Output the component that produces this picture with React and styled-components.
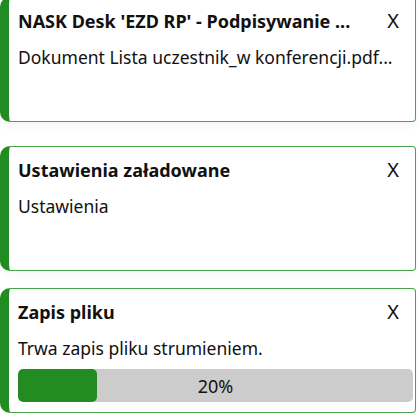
import styled, { createGlobalStyle } from "styled-components";

const GlobalStyle = createGlobalStyle`
  html, body {
    margin: 0;
    padding: 0;
    background: #ffffff;
    overflow: hidden;
  }
  body {
    font-family: "Noto Sans", "Open Sans", sans-serif;
    color: #111111;
  }
`;

const Stack = styled.div`
  display: flex;
  flex-direction: column;
  width: 416px;
`;

const Toast = styled.div`
  box-sizing: border-box;
  height: 125px;
  margin-top: ${(p) => p.$offset}px;
  background: #ffffff;
  border: 1px solid #46a446;
  border-left: 9px solid #228b22;
  border-radius: 10px 4px 4px 10px;
  padding: 12px 2px 10px 9px;
  display: flex;
  flex-direction: column;
  box-shadow: 0 4px 10px rgba(0, 0, 0, 0.035);
`;

const Header = styled.div`
  display: flex;
  align-items: center;
  justify-content: space-between;
  padding-right: 14px;
  height: 22px;
`;

const Title = styled.div`
  font-weight: 700;
  font-size: 18px;
  line-height: 22px;
  white-space: nowrap;
`;

const Close = styled.button`
  border: none;
  background: none;
  padding: 0;
  font-family: inherit;
  font-size: 20px;
  line-height: 22px;
  color: #111111;
  cursor: pointer;
`;

const Message = styled.div`
  margin-top: 14px;
  font-size: 17.5px;
  line-height: 22px;
  white-space: nowrap;
`;

const Track = styled.div`
  position: relative;
  margin-top: 10px;
  height: 33px;
  border-radius: 5px;
  background: #cccccc;
  overflow: hidden;
  display: flex;
  align-items: center;
  justify-content: center;
`;

const Fill = styled.div`
  position: absolute;
  left: 0;
  top: 0;
  bottom: 0;
  background: #228b22;
  border-radius: 5px;
`;

const Percent = styled.span`
  position: relative;
  font-size: 18px;
  color: #111111;
`;

const toasts = [
  {
    id: 1,
    offset: -3,
    title: "NASK Desk 'EZD RP' - Podpisywanie ...",
    message: "Dokument Lista uczestnik_w konferencji.pdf...",
  },
  {
    id: 2,
    offset: 24,
    title: "Ustawienia załadowane",
    message: "Ustawienia",
  },
  {
    id: 3,
    offset: 17,
    title: "Zapis pliku",
    message: "Trwa zapis pliku strumieniem.",
    progress: 20,
  },
];

export default function App() {
  return (
    <>
      <GlobalStyle />
      <Stack>
        {toasts.map((t) => (
          <Toast key={t.id} $offset={t.offset}>
            <Header>
              <Title>{t.title}</Title>
              <Close>X</Close>
            </Header>
            <Message>{t.message}</Message>
            {t.progress !== undefined && (
              <Track>
                <Fill style={{ width: `${t.progress}%` }} />
                <Percent>{t.progress}%</Percent>
              </Track>
            )}
          </Toast>
        ))}
      </Stack>
    </>
  );
}
